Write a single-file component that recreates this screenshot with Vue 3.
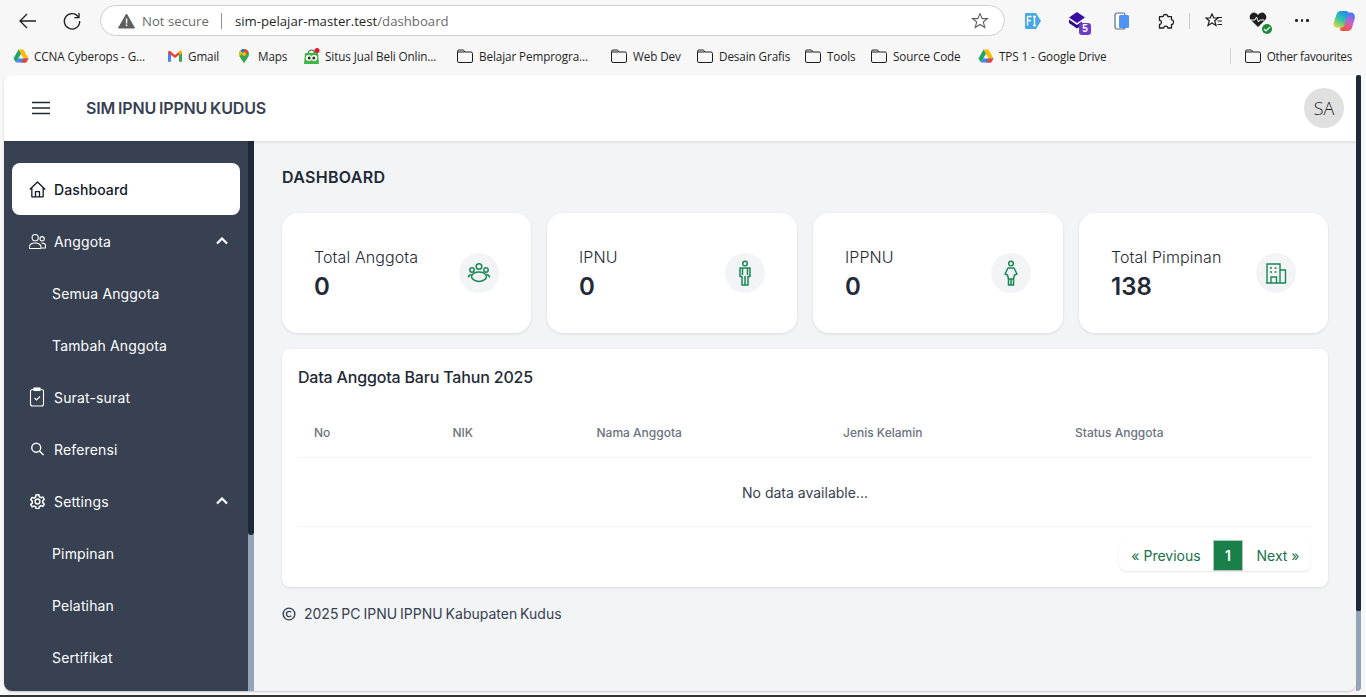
<script setup>
const bookmarks = [
  { label: 'CCNA Cyberops - G...', icon: 'drive', width: 154 },
  { label: 'Gmail', icon: 'gmail', width: 70 },
  { label: 'Maps', icon: 'maps', width: 67 },
  { label: 'Situs Jual Beli Onlin...', icon: 'toko', width: 153 },
  { label: 'Belajar Pemprogra...', icon: 'folder', width: 154 },
  { label: 'Web Dev', icon: 'folder', width: 86 },
  { label: 'Desain Grafis', icon: 'folder', width: 108 },
  { label: 'Tools', icon: 'folder', width: 66 },
  { label: 'Source Code', icon: 'folder', width: 107 },
  { label: 'TPS 1 - Google Drive', icon: 'drive', width: 150 }
]
const stats = [
  { label: 'Total Anggota', value: '0', icon: 'group' },
  { label: 'IPNU', value: '0', icon: 'man' },
  { label: 'IPPNU', value: '0', icon: 'woman' },
  { label: 'Total Pimpinan', value: '138', icon: 'building' }
]
const columns = ['No', 'NIK', 'Nama Anggota', 'Jenis Kelamin', 'Status Anggota']
</script>

<template>
  <div class="screen">
    <header class="chrome">
      <div class="toolbar">
        <button class="tool back" aria-label="Back">
          <svg width="20" height="20" viewBox="0 0 20 20" fill="none" stroke="#1f1f1f" stroke-width="1.3"><path d="M18 10H2M9 3l-7 7 7 7"/></svg>
        </button>
        <button class="tool reload" aria-label="Reload">
          <svg width="20" height="20" viewBox="0 0 20 20" fill="none" stroke="#1f1f1f" stroke-width="1.3"><path d="M16.5 6.2A7.7 7.7 0 1 0 17.7 10"/><path d="M17 2v4.6h-4.6"/></svg>
        </button>
        <div class="address">
          <svg class="warn" width="17" height="16" viewBox="0 0 17 16"><path d="M8.5 1 16.5 15H.5z" fill="#5f5f5f" stroke="#5f5f5f" stroke-linejoin="round"/><rect x="7.8" y="5.5" width="1.5" height="5" fill="#fff"/><rect x="7.8" y="11.5" width="1.5" height="1.6" fill="#fff"/></svg>
          <span class="insecure">Not secure</span>
          <span class="divider"></span>
          <span class="url">sim-pelajar-master.test<span class="path">/dashboard</span></span>
          <svg class="star" width="18" height="18" viewBox="0 0 18 18" fill="none" stroke="#5f5f5f" stroke-width="1.1"><path d="M9 1.6l2.2 5h5.3l-4.2 3.4 1.5 5.5L9 12.5l-4.8 3 1.5-5.5L1.5 6.6h5.3z"/></svg>
        </div>
        <div class="extensions">
          <svg class="ext" width="18" height="18" viewBox="0 0 18 18"><path d="M2 1h10l5 8-5 8H2a1 1 0 0 1-1-1V2a1 1 0 0 1 1-1z" fill="#48a8e4"/><path d="M3.5 4.5h4M3.5 4.5v9M3.5 8.5h3.500M9 4.5h3M9 13.5h3M10.5 4.5v9" fill="none" stroke="#fff" stroke-width="1.4"/></svg>
          <span class="ext-stack">
            <svg width="18" height="20" viewBox="0 0 18 20"><path d="M8 1l8 5.5-8 5.500L0 6.500z" fill="#3a0ca3"/><path d="M0 8.500l8 5.500 5-3.400V14l-5 3.500-8-5.500z" fill="#2d0a85"/></svg>
            <span class="badge-s">5</span>
          </span>
          <svg class="ext" width="16" height="18" viewBox="0 0 16 18"><rect x="1" y="1" width="10" height="16" rx="2" fill="#fff" stroke="#5c6b80" stroke-width="1.2"/><rect x="5" y="3" width="10" height="13" rx="1.5" fill="#4d94f5"/></svg>
          <svg class="ext" width="18" height="18" viewBox="0 0 18 18" fill="none" stroke="#1f1f1f" stroke-width="1.3" stroke-linejoin="round"><path d="M6.2 4.6C5.800 1.800 11.200 1.800 10.800 4.600H14.500V7.800C17.200 7.400 17.200 12.800 14.500 12.400V16H10.800C11.200 13.600 6.300 13.600 6.700 16H2.500V12.300C5 12.700 5 8 2.500 8.400V4.600z"/></svg>
          <span class="ext-sep"></span>
          <svg class="ext" width="18" height="18" viewBox="0 0 18 18" fill="none" stroke="#1f1f1f" stroke-width="1.2"><path d="M7 2l1.800 4H13l-3.300 2.700L11 13.500 7 11l-4 2.500 1.300-4.800L1 6h4.200z"/><path d="M12 5.500h5M12.500 9h4.500M12.500 12.500h4.500"/></svg>
          <span class="ext-stack">
            <svg width="20" height="18" viewBox="0 0 20 18"><path d="M9 16 2 9a4 4 0 0 1 0-6 4.300 4.300 0 0 1 7 1 4.300 4.300 0 0 1 7-1 4 4 0 0 1 0 6z" fill="#1f1f1f"/><path d="M2 9h4l1.500-3 2 5 1.500-2h4" fill="none" stroke="#fff" stroke-width="1"/></svg>
            <span class="badge-ok"><svg width="8" height="8" viewBox="0 0 8 8" fill="none" stroke="#fff" stroke-width="1.2"><path d="M1 4l2 2 4-4"/></svg></span>
          </span>
          <span class="dots"><i></i><i></i><i></i></span>
          <svg class="copilot" width="22" height="22" viewBox="0 0 22 22">
            <defs>
              <linearGradient id="copA" x1="0.7" y1="0" x2="0.2" y2="1"><stop offset="0" stop-color="#1f8ff0"/><stop offset=".5" stop-color="#35c6a0"/><stop offset="1" stop-color="#e8d83a"/></linearGradient>
              <linearGradient id="copB" x1="0.7" y1="0" x2="0.3" y2="1"><stop offset="0" stop-color="#3f7cf5"/><stop offset=".45" stop-color="#c95fd0"/><stop offset="1" stop-color="#f4552e"/></linearGradient>
            </defs>
            <path d="M14 2.500H18c3 0 4.500 3 3.700 6l-2.500 8.500C18.500 19.800 17 21 14.500 21H9c-1.500 0-2.300-1-1.800-2.500L11 6c.6-2 1.500-3.500 3-3.500z" fill="url(#copB)"/>
            <path d="M7.500 1H13c1.800 0 2.500 1 2 2.500L11.500 15c-.5 1.700-1.500 2.700-3.500 2.700H4C1.200 17.700-.2 15.500.6 13L3.500 4.500C4.200 2.200 5.500 1 7.500 1z" fill="url(#copA)"/>
          </svg>
        </div>
      </div>
      <nav class="bookmarks">
        <span v-for="b in bookmarks" :key="b.label" class="bookmark" :style="{ width: b.width + 'px' }">
          <svg v-if="b.icon === 'drive'" class="bm-icon" width="16" height="16" viewBox="0 0 16 16"><path d="M5.500 1.500h5L15.500 10.500h-5z" fill="#fbbc04"/><path d="M5.500 1.500 .5 10.500 3 14.500 8 5.800z" fill="#1fa463"/><path d="M5.300 10.500h10.200L13 14.500H3z" fill="#4285f4"/><path d="M13 14.500H8l2.500-4h5z" fill="#ea4335"/></svg>
          <svg v-else-if="b.icon === 'gmail'" class="bm-icon" width="16" height="16" viewBox="0 0 16 16"><path d="M1 4v9.500h3V7l4 3 4-3v6.500h3V4l-1.500-1.500L8 7 2.500 2.500z" fill="#ea4335"/><path d="M1 5v8.500h3V7z" fill="#4285f4"/><path d="M12 7v6.500h3V5z" fill="#34a853"/><path d="M12 7l3-2V3.500l-1.500-1L12 3.700z" fill="#fbbc04"/></svg>
          <svg v-else-if="b.icon === 'maps'" class="bm-icon" width="16" height="16" viewBox="0 0 16 16"><path d="M7 15.500C5.500 12 2 9.500 2 6a5 5 0 0 1 10 0c0 3.500-3.500 6-5 9.500z" fill="#34a853"/><path d="M3.500 2.500A5 5 0 0 1 7 1v3.500a1.500 1.500 0 0 0-1.300.7z" fill="#1a73e8"/><path d="M7 1a5 5 0 0 1 4.500 2.800L8.500 6A1.500 1.500 0 0 0 7 4.500z" fill="#ea4335"/><path d="M2 6c0-1.400.5-2.600 1.500-3.500l2.200 2.700L2.500 8.300A5 5 0 0 1 2 6z" fill="#fbbc04"/><circle cx="7" cy="6" r="1.900" fill="#fbbc04"/></svg>
          <svg v-else-if="b.icon === 'toko'" class="bm-icon" width="16" height="16" viewBox="0 0 16 16"><path d="M1 5h13l1 11H0z" fill="#42b549"/><path d="M4.500 5a3 3 0 0 1 6 0" fill="none" stroke="#2a7a32" stroke-width="1.200"/><circle cx="4.800" cy="10" r="3" fill="#fff"/><circle cx="10.200" cy="10" r="3" fill="#fff"/><circle cx="5.200" cy="10" r="1.500" fill="#1f3d22"/><circle cx="9.800" cy="10" r="1.500" fill="#1f3d22"/><path d="M6.800 12.500h1.400l-.7 1z" fill="#f2a51a"/><circle cx="13" cy="2.500" r="2.500" fill="#e6132d"/></svg>
          <svg v-else class="bm-icon folder" width="16" height="14" viewBox="0 0 16 14" fill="none" stroke="#1f1f1f" stroke-width="1"><path d="M.5 3V12a1.500 1.500 0 0 0 1.500 1.500h12a1.500 1.500 0 0 0 1.500-1.500V4.500A1.500 1.500 0 0 0 14 3H8L6.500 1H2A1.500 1.500 0 0 0 .5 2.500V3h7"/></svg>
          <span class="bm-label">{{ b.label }}</span>
        </span>
        <span class="bm-spacer"></span>
        <span class="bm-sep"></span>
        <span class="bookmark other">
          <svg class="bm-icon folder" width="16" height="14" viewBox="0 0 16 14" fill="none" stroke="#1f1f1f" stroke-width="1"><path d="M.5 3V12a1.500 1.500 0 0 0 1.500 1.500h12a1.500 1.500 0 0 0 1.500-1.500V4.500A1.500 1.500 0 0 0 14 3H8L6.500 1H2A1.500 1.500 0 0 0 .5 2.500V3h7"/></svg>
          <span class="bm-label">Other favourites</span>
        </span>
      </nav>
    </header>

    <div class="viewport">
      <div class="page">
        <div class="topbar">
          <div class="topbar-left">
            <svg width="18" height="14" viewBox="0 0 18 14" fill="none" stroke="#1f2937" stroke-width="1.5"><path d="M0 1.500h18M0 7h18M0 12.500h18"/></svg>
            <span class="brand">SIM IPNU IPPNU KUDUS</span>
          </div>
          <div class="avatar">SA</div>
        </div>
        <div class="body">
          <aside class="sidebar">
            <ul class="menu">
              <li class="item active">
                <svg class="mi" width="17" height="17" viewBox="1.500 1.500 21 21" fill="none" stroke="currentColor" stroke-width="1.600" stroke-linejoin="round"><path d="M2.500 12 12 2.800 21.500 12M5 10v11h14V10M9.500 21v-6.500h5V21"/></svg>
                <span>Dashboard</span>
              </li>
              <li class="item">
                <svg class="mi" width="17" height="17" viewBox="1 2 22 20" fill="none" stroke="currentColor" stroke-width="1.400"><circle cx="9" cy="7" r="4"/><circle cx="18" cy="8.500" r="2.800"/><path d="M1.500 21v-1.500C1.500 16 5 14 9 14s7.500 2 7.500 5.500V21zM17 14c3 0 5.500 1.500 5.500 4v2.500h-5"/></svg>
                <span>Anggota</span>
                <svg class="chev" width="12" height="8" viewBox="0 0 12 8" fill="none" stroke="#fff" stroke-width="2.200"><path d="M1 6.500l5-5 5 5"/></svg>
              </li>
              <li class="item sub">Semua Anggota</li>
              <li class="item sub">Tambah Anggota</li>
              <li class="item">
                <svg class="mi" width="17" height="20" viewBox="0 0 17 20" fill="none" stroke="currentColor" stroke-width="1.100"><rect x="1.500" y="2.500" width="13" height="16.500" rx="2"/><rect x="5" y="1" width="6" height="2.500" fill="currentColor"/><path d="M5.500 11l2 2 3.500-3.500"/></svg>
                <span>Surat-surat</span>
              </li>
              <li class="item">
                <svg class="mi mi-small" width="14" height="14" viewBox="1 1 22 22" fill="none" stroke="currentColor" stroke-width="2.200"><circle cx="10" cy="10" r="7"/><path d="M15 15l6.500 6.500"/></svg>
                <span>Referensi</span>
              </li>
              <li class="item">
                <svg class="mi mi-small" width="15" height="15" viewBox="1 1 22 22" fill="none" stroke="currentColor" stroke-width="2.200" stroke-linejoin="round"><path d="M10 2h4l.6 3 2.400 1.400 2.900-1 2 3.500-2.300 2a7 7 0 0 1 0 2.800l2.300 2-2 3.500-2.900-1-2.400 1.400-.6 3h-4l-.6-3L7 18.800l-2.900 1-2-3.500 2.300-2a7 7 0 0 1 0-2.800l-2.300-2 2-3.500 2.900 1L9.400 5z"/><circle cx="12" cy="12" r="3.500"/></svg>
                <span>Settings</span>
                <svg class="chev" width="12" height="8" viewBox="0 0 12 8" fill="none" stroke="#fff" stroke-width="2.200"><path d="M1 6.500l5-5 5 5"/></svg>
              </li>
              <li class="item sub">Pimpinan</li>
              <li class="item sub">Pelatihan</li>
              <li class="item sub">Sertifikat</li>
            </ul>
          </aside>
          <div class="side-scroll"><span class="side-thumb"></span></div>
          <main class="main">
            <h1 class="page-title">DASHBOARD</h1>
            <section class="stats">
              <article v-for="s in stats" :key="s.label" class="stat">
                <div>
                  <p class="stat-label">{{ s.label }}</p>
                  <p class="stat-value">{{ s.value }}</p>
                </div>
                <span class="stat-icon">
                  <svg v-if="s.icon === 'group'" width="24" height="24" viewBox="0 0 24 24" fill="none" stroke="#198754" stroke-width="1.500"><circle cx="12" cy="5.500" r="2.800"/><circle cx="5" cy="9" r="2.200"/><circle cx="19" cy="9" r="2.200"/><path d="M12 11c-4 0-7.500 2-7.500 4.500S8 20.500 12 20.500s7.500-2.500 7.500-5S16 11 12 11z"/><path d="M4.500 13.500C2.500 13.800 1.500 15 1.500 16.500M19.500 13.500c2 .3 3 1.500 3 3"/></svg>
                  <svg v-else-if="s.icon === 'man'" width="24" height="26" viewBox="0 0 24 26" fill="none" stroke="#198754" stroke-width="1.500"><circle cx="12" cy="3.500" r="2.300"/><path d="M7 8h10v8.500h-2V25H9v-8.500H7z" stroke-linejoin="round"/><path d="M12 16v9M9.500 8v7M14.500 8v7"/></svg>
                  <svg v-else-if="s.icon === 'woman'" width="24" height="26" viewBox="0 0 24 26" fill="none" stroke="#198754" stroke-width="1.500"><circle cx="12" cy="3.500" r="2.300"/><path d="M9 8h6l3 6-2.500 1L14.500 19H9.500L8.500 15 6 14z" stroke-linejoin="round"/><path d="M9.500 19v6h5v-6M12 19v6"/></svg>
                  <svg v-else width="22" height="22" viewBox="0 0 22 22" fill="none" stroke="#198754" stroke-width="1.400"><path d="M2 21V2h13v19M15 8h5.500v13M1 21h20"/><path d="M5 6h2M9.500 6h2M5 10h2M9.500 10h2M6 21v-6h5.500v6"/></svg>
                </span>
              </article>
            </section>

            <section class="panel">
              <h2 class="panel-title">Data Anggota Baru Tahun 2025</h2>
              <table class="table">
                <colgroup>
                  <col class="c1" /><col class="c2" /><col class="c3" /><col class="c4" /><col />
                </colgroup>
                <thead>
                  <tr><th v-for="c in columns" :key="c">{{ c }}</th></tr>
                </thead>
                <tbody>
                  <tr><td colspan="5">No data available...</td></tr>
                </tbody>
              </table>
              <div class="pager-row">
                <div class="pager">
                  <span class="pg prev">« Previous</span>
                  <span class="pg current">1</span>
                  <span class="pg next">Next »</span>
                </div>
              </div>
            </section>

            <footer class="foot">
              <svg width="14" height="14" viewBox="0 0 24 24" fill="none" stroke="#374151" stroke-width="2.400"><circle cx="12" cy="12" r="10"/><path d="M15.500 9a4.500 4.500 0 1 0 0 6"/></svg>
              <span>2025 PC IPNU IPPNU Kabupaten Kudus</span>
            </footer>
          </main>
        </div>
      </div>
      <div class="page-scroll"><span class="page-thumb"></span></div>
    </div>
    <div class="taskbar"></div>
  </div>
</template>

<style>
html, body { margin: 0; background: #f7f7f7; overflow: hidden; }
</style>

<style scoped>
.screen {
  width: 1366px;
  height: 697px;
  display: flex;
  flex-direction: column;
  overflow: hidden;
  background: #f7f7f7;
  font-family: Inter, "Liberation Sans", sans-serif;
}
.chrome {
  height: 75px;
  flex: none;
  font-family: "Open Sans", "Noto Sans", sans-serif;
  color: #1f1f1f;
}
.toolbar {
  height: 41px;
  display: flex;
  align-items: center;
  box-sizing: border-box;
}
.tool {
  border: 0;
  background: none;
  padding: 0;
  width: 20px;
  height: 20px;
  display: flex;
}
.back { margin-left: 18px; }
.reload { margin-left: 24px; }
.address {
  margin-left: 18px;
  width: 905px;
  height: 31px;
  box-sizing: border-box;
  border: 1px solid #cfcfcf;
  border-radius: 16px;
  background: #fff;
  display: flex;
  align-items: center;
  padding: 0 15px 0 17px;
  font-size: 13.2px;
}
.insecure { margin-left: 7px; color: #6a6a6a; }
.divider { width: 1px; height: 16px; background: #8f8f8f; margin: 0 13px 0 12px; }
.url { color: #1f1f1f; flex: 1; }
.path { color: #6a6a6a; }
.star { flex: none; }
.extensions {
  display: flex;
  align-items: center;
  margin-left: 19px;
  flex: 1;
  height: 24px;
}
.ext { flex: none; }
.extensions > :nth-child(2) { margin-left: 27px; }
.extensions > :nth-child(3) { margin-left: 25px; }
.extensions > :nth-child(4) { margin-left: 27px; }
.extensions > :nth-child(5) { margin-left: 14px; }
.extensions > :nth-child(6) { margin-left: 15px; }
.extensions > :nth-child(7) { margin-left: 26px; }
.extensions > :nth-child(8) { margin-left: 26px; }
.extensions > :nth-child(9) { margin-left: 24px; }
.ext-stack { position: relative; width: 20px; height: 20px; display: block; flex: none; }
.ext-sep { width: 1px; height: 16px; background: #c8c8c8; flex: none; }
.badge-s {
  position: absolute;
  right: -2px;
  bottom: -4px;
  width: 12px;
  height: 12px;
  border-radius: 3px;
  background: #6c3cc4;
  color: #fff;
  font: 700 10px/12px "Liberation Sans", sans-serif;
  text-align: center;
}
.badge-ok {
  position: absolute;
  right: -3px;
  bottom: -3px;
  width: 10px;
  height: 10px;
  border-radius: 50%;
  background: #1a8a3a;
  display: flex;
  align-items: center;
  justify-content: center;
}
.dots { display: flex; gap: 3px; width: 14px; flex: none; }
.dots i { width: 2.5px; height: 2.5px; border-radius: 50%; background: #1f1f1f; display: block; }
.copilot { flex: none; }
.bookmarks {
  height: 34px;
  display: flex;
  align-items: center;
  padding-left: 13px;
  padding-bottom: 4px;
  box-sizing: border-box;
  font-size: 11.7px;
}
.bookmark { display: flex; align-items: center; flex: none; white-space: nowrap; letter-spacing: -0.1px; }
.bm-icon { flex: none; }
.bm-label { margin-left: 5px; }
.folder + .bm-label { margin-left: 6px; }
.bm-spacer { flex: 1; }
.bm-sep { width: 1px; height: 16px; background: #d0d0d0; margin-right: 14px; }
.other { margin-right: 14px; letter-spacing: -0.25px; }
.viewport { flex: 1; display: flex; min-height: 0; padding-left: 4px; padding-bottom: 4px; }
.page {
  width: 1352px;
  display: flex;
  flex-direction: column;
  background: #f3f4f6;
  border-radius: 8px 0 8px 8px;
  overflow: hidden;
  box-shadow: 0 1px 2px rgba(0,0,0,.2);
}
.topbar {
  height: 66px;
  flex: none;
  background: #fff;
  display: flex;
  align-items: center;
  justify-content: space-between;
  box-shadow: 0 1px 3px rgba(0,0,0,.12);
  position: relative;
  z-index: 1;
  padding: 0 12px 0 28px;
}
.topbar-left { display: flex; align-items: center; gap: 36px; }
.brand { font-size: 16px; font-weight: 600; color: #374151; letter-spacing: -0.15px; word-spacing: -1px; }
.avatar {
  width: 40px;
  height: 40px;
  border-radius: 50%;
  background: #e0e0e0;
  color: #222;
  font: 300 18px/40px "Open Sans", sans-serif;
  text-align: center;
}
.body { flex: 1; display: flex; min-height: 0; }
.sidebar {
  width: 244px;
  flex: none;
  background: #374151;
  overflow: hidden;
  padding: 22px 8px 0;
  box-sizing: border-box;
}
.menu { list-style: none; margin: 0; padding: 0; }
.item {
  height: 52px;
  display: flex;
  align-items: center;
  padding: 0 12px 0 17px;
  color: #fff;
  font-size: 14px;
  font-weight: 400;
  letter-spacing: .15px;
  box-sizing: border-box;
}
.item span { margin-left: 8px; }
.mi { flex: none; width: 17px; }
.mi-small { width: 15px; margin: 0 1px; }
.item.active { background: #fff; color: #111827; border-radius: 8px; font-weight: 500; letter-spacing: .1px; }
.item.sub { padding-left: 40px; }
.chev { margin-left: auto; }
.side-scroll { width: 6px; flex: none; background: #94a3b8; }
.side-thumb { display: block; height: 394px; background: #1f2937; border-radius: 0 0 3px 3px; }
.main { flex: 1; min-width: 0; padding: 0 28px; }
.page-title { margin: 26px 0 0; font-size: 16px; line-height: 20px; font-weight: 600; letter-spacing: .3px; color: #1f2937; }
.stats { display: grid; grid-template-columns: 249px 250px 250px 249px; gap: 16px; margin-top: 26px; }
.stat {
  height: 120px;
  background: #fff;
  border-radius: 16px;
  box-shadow: 0 1px 3px rgba(0,0,0,.1);
  display: flex;
  align-items: center;
  justify-content: space-between;
  padding: 0 32px;
  box-sizing: border-box;
}
.stat-label { margin: 1px 0 0; font-size: 16px; line-height: 24px; font-weight: 300; letter-spacing: .1px; color: #1f2937; }
.stat-value { margin: 2px 0 0; font-size: 24px; line-height: 32px; font-weight: 600; color: #1f2937; }
.stat-icon {
  width: 40px;
  height: 40px;
  border-radius: 50%;
  background: #f3f4f6;
  display: flex;
  align-items: center;
  justify-content: center;
}
.panel {
  margin-top: 16px;
  height: 238px;
  background: #fff;
  border-radius: 8px;
  box-shadow: 0 1px 3px rgba(0,0,0,.1);
  padding: 16px;
  box-sizing: border-box;
}
.panel-title { margin: 0; font-size: 16px; line-height: 24px; font-weight: 500; letter-spacing: -.18px; color: #1f2937; }
.table { width: 100%; table-layout: fixed; border-collapse: collapse; margin-top: 16px; }
.c1 { width: 138.5px; }
.c2 { width: 144px; }
.c3 { width: 246.5px; }
.c4 { width: 232px; }
.table th {
  height: 52px;
  padding: 3px 16px 0;
  text-align: left;
  font-size: 12px;
  font-weight: 500;
  color: #6b7280;
  border-bottom: 1px solid #f3f4f6;
  box-sizing: border-box;
}
.table td {
  height: 69px;
  padding: 2px 0 0;
  text-align: center;
  font-size: 14px;
  font-weight: 400;
  color: #374151;
  border-bottom: 1px solid #f3f4f6;
  box-sizing: border-box;
}
.pager-row { display: flex; justify-content: flex-end; margin-top: 13px; padding-right: 1px; }
.pager {
  display: flex;
  height: 31px;
  border-radius: 8px;
  box-shadow: 0 1px 2px rgba(0,0,0,.1);
  background: #fff;
  overflow: hidden;
  font-size: 14px;
  font-weight: 400;
  color: #157347;
}
.pg { display: flex; align-items: center; justify-content: center; box-sizing: border-box; }
.prev { width: 94px; }
.current { width: 30px; background: #198049; color: #fff; font-weight: 600; border: 1px solid #b5c4bc; }
.next { width: 68px; padding-left: 2px; }
.foot {
  margin-top: 18px;
  display: flex;
  align-items: center;
  gap: 8px;
  font-size: 14px;
  font-weight: 400;
  line-height: 18px;
  word-spacing: -1px;
  color: #374151;
}
.page-scroll { width: 5px; flex: none; background: #94a3b8; border-radius: 0 0 4px 0; }
.page-thumb { display: block; height: 536px; background: #1f2937; border-radius: 4px 4px 3px 3px; }
.taskbar { flex: none; height: 2px; background: #333; }
</style>
